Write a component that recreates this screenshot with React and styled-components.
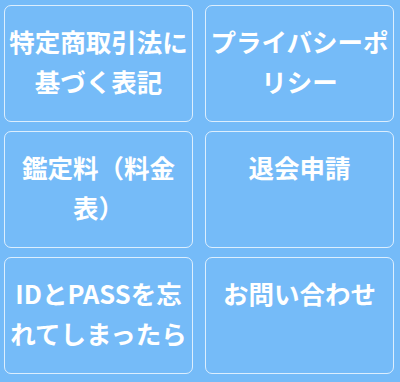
import React from "react";
import styled, { createGlobalStyle } from "styled-components";

const Global = createGlobalStyle`
  html, body { margin: 0; padding: 0; background: #75bbf8; }
  body { width: 400px; height: 382px; overflow: hidden; }
`;

const Grid = styled.div`
  display: grid;
  grid-template-columns: 189px 189px;
  grid-auto-rows: 117px;
  column-gap: 12px;
  row-gap: 9px;
  padding: 5px 0 0 4px;
  font-family: "Noto Sans CJK JP", "Noto Sans", sans-serif;
`;

const Card = styled.a`
  box-sizing: border-box;
  display: block;
  border: 1.5px solid rgba(255, 255, 255, 0.75);
  border-radius: 7px;
  padding: 15px 2px 0;
  color: #ffffff;
  font-weight: 700;
  font-size: 25.5px;
  line-height: 40px;
  text-align: center;
  text-decoration: none;
  line-break: strict;
`;

const items = [
  "特定商取引法に基づく表記",
  "プライバシーポリシー",
  "鑑定料（料金表）",
  "退会申請",
  "IDとPASSを忘れてしまったら",
  "お問い合わせ",
];

export default function App() {
  return (
    <>
      <Global />
      <Grid>
        {items.map((t) => (
          <Card key={t} href="#">
            {t}
          </Card>
        ))}
      </Grid>
    </>
  );
}
